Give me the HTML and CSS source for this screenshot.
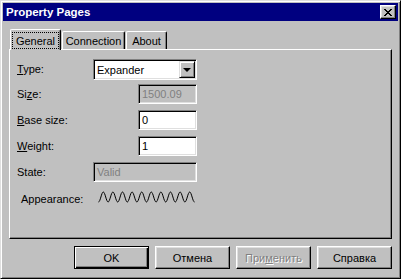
FILE: index.html
```html
<!DOCTYPE html>
<html lang="en">
<head>
    <meta charset="UTF-8">
    <title>Property Pages</title>
    <link rel="stylesheet" href="styles.css">
</head>
<body>
    <div class="window">
        <div class="titlebar">
            <span class="title">Property Pages</span>
            <button class="close">
                <svg width="8" height="7" viewBox="0 0 8 7" shape-rendering="crispEdges">
                    <path d="M0 0h2v1H0zM6 0h2v1H6zM1 1h2v1H1zM5 1h2v1H5zM2 2h4v1H2zM3 3h2v1H3zM2 4h4v1H2zM1 5h2v1H1zM5 5h2v1H5zM0 6h2v1H0zM6 6h2v1H6z" fill="#000"/>
                </svg>
            </button>
        </div>

        <div class="tabs">
            <div class="tab active"><span class="focus">General</span></div>
            <div class="tab">Connection</div>
            <div class="tab">About</div>
        </div>

        <div class="panel">
            <div class="form">
                <label class="lbl lbl-type"><u>T</u>ype:</label>
                <div class="combo">
                    <span class="combo-text">Expander</span>
                    <span class="combo-btn"><span class="arrow"></span></span>
                </div>

                <label class="lbl">Si<u>z</u>e:</label>
                <div class="field small disabled">1500.09</div>

                <label class="lbl"><u>B</u>ase size:</label>
                <div class="field small">0</div>

                <label class="lbl"><u>W</u>eight:</label>
                <div class="field small">1</div>

                <label class="lbl">State:</label>
                <div class="field disabled">Valid</div>

                <label class="lbl lbl-appearance">Appearance:</label>
                <svg class="wave" width="99" height="12" viewBox="0 0 99 12">
                    <path d="M0.5 11 c1.8 0 3 -10 4.8 -10 s3 10 4.8 10 s3 -10 4.8 -10 s3 10 4.8 10 s3 -10 4.8 -10 s3 10 4.8 10 s3 -10 4.8 -10 s3 10 4.8 10 s3 -10 4.8 -10 s3 10 4.8 10 s3 -10 4.8 -10 s3 10 4.8 10 s3 -10 4.8 -10 s3 10 4.8 10 s3 -10 4.8 -10 s3 10 4.8 10 s3 -10 4.8 -10 s3 10 4.8 10 s3 -10 4.8 -10 s3 10 4.8 10" fill="none" stroke="#000" stroke-width="1"/>
                </svg>
            </div>
        </div>

        <div class="buttons">
            <button class="btn default">OK</button>
            <button class="btn">Отмена</button>
            <button class="btn disabled">При<u>м</u>енить</button>
            <button class="btn">Справка</button>
        </div>
    </div>
</body>
</html>
```

FILE: styles.css
```css
body, html {
    margin: 0;
    padding: 0;
    background-color: #c0c0c0;
    font-family: "Liberation Sans", Arial, sans-serif;
    font-size: 11px;
    color: #000;
}
.window {
    width: 401px;
    height: 279px;
    box-sizing: border-box;
    background-color: #c0c0c0;
    border: 1px solid;
    border-color: #dfdfdf #000 #000 #dfdfdf;
    box-shadow: inset 1px 1px #fff, inset -1px -1px #808080;
    padding: 2px;
}
.titlebar {
    height: 18px;
    background-color: #000080;
    color: #fff;
    display: flex;
    align-items: center;
    justify-content: space-between;
    padding-left: 3px;
}
.title {
    font-weight: bold;
    font-size: 11.5px;
}
.close {
    width: 16px;
    height: 14px;
    margin-right: 2px;
    padding: 0;
    box-sizing: border-box;
    background-color: #c0c0c0;
    border: 1px solid;
    border-color: #fff #000 #000 #fff;
    box-shadow: inset -1px -1px #808080, inset 1px 1px #dfdfdf;
    display: flex;
    align-items: center;
    justify-content: center;
}
.tabs {
    height: 28px;
    box-sizing: border-box;
    display: flex;
    align-items: flex-end;
    padding-left: 7px;
}
.tab {
    height: 18px;
    box-sizing: border-box;
    border: 1px solid;
    border-bottom: none;
    border-color: #fff #000 #000 #fff;
    border-radius: 2px 2px 0 0;
    box-shadow: inset -1px 0 #808080;
    display: flex;
    align-items: center;
    justify-content: center;
    margin-left: 1px;
}
.tab:nth-child(2) {
    width: 63px;
}
.tab:nth-child(3) {
    width: 41px;
}
.tab.active {
    width: 51px;
    height: 21px;
    margin-left: 0;
    margin-bottom: -1px;
    position: relative;
    z-index: 1;
    background-color: #c0c0c0;
}
.focus {
    width: 47px;
    height: 17px;
    box-sizing: border-box;
    border: 1px dotted #000;
    display: flex;
    align-items: center;
    justify-content: center;
    margin-top: 1px;
}
.panel {
    margin-left: 6px;
    width: 383px;
    height: 190px;
    box-sizing: border-box;
    border: 1px solid;
    border-color: #fff #000 #000 #fff;
    box-shadow: inset -1px -1px #808080;
    padding: 9px 0 0 7px;
}
.form {
    display: grid;
    grid-template-columns: 76px 104px;
    grid-template-rows: 25px 26px 26px 26px 26px 22px;
    align-items: start;
}
.lbl {
    line-height: 20px;
}
.lbl-type {
    line-height: 21px;
}
.lbl-appearance {
    line-height: 22px;
    padding-left: 4px;
}
.field, .combo {
    height: 20px;
    box-sizing: border-box;
    background-color: #fff;
    border: 1px solid;
    border-color: #808080 #fff #fff #808080;
    box-shadow: inset 1px 1px #000, inset -1px -1px #dfdfdf;
    line-height: 18px;
    padding-left: 3px;
}
.field.small {
    width: 59px;
    justify-self: end;
}
.field.disabled {
    background-color: #c0c0c0;
    color: #808080;
}
.combo {
    height: 21px;
    display: flex;
    align-items: center;
    justify-content: space-between;
    padding: 0 1px 0 3px;
}
.combo-btn {
    width: 16px;
    height: 17px;
    box-sizing: border-box;
    background-color: #c0c0c0;
    border: 1px solid;
    border-color: #dfdfdf #000 #000 #dfdfdf;
    box-shadow: inset 1px 1px #fff, inset -1px -1px #808080;
    display: flex;
    align-items: center;
    justify-content: center;
}
.arrow {
    width: 0;
    height: 0;
    border-left: 4px solid transparent;
    border-right: 4px solid transparent;
    border-top: 4px solid #000;
}
.wave {
    display: block;
    margin: 3px 0 0 5px;
}
.buttons {
    display: flex;
    justify-content: flex-end;
    gap: 6px;
    margin-top: 7px;
    padding-right: 6px;
}
.btn {
    width: 75px;
    height: 23px;
    box-sizing: border-box;
    padding: 0;
    background-color: #c0c0c0;
    border: 1px solid;
    border-color: #fff #000 #000 #fff;
    box-shadow: inset -1px -1px #808080, inset 1px 1px #dfdfdf;
    font-family: "Liberation Sans", Arial, sans-serif;
    font-size: 11px;
    color: #000;
}
.btn.default {
    border-color: #000;
    box-shadow: inset 1px 1px #fff, inset -1px -1px #000, inset -2px -2px #808080;
}
.btn.disabled {
    color: #808080;
    text-shadow: 1px 1px 0 #fff;
}
```
